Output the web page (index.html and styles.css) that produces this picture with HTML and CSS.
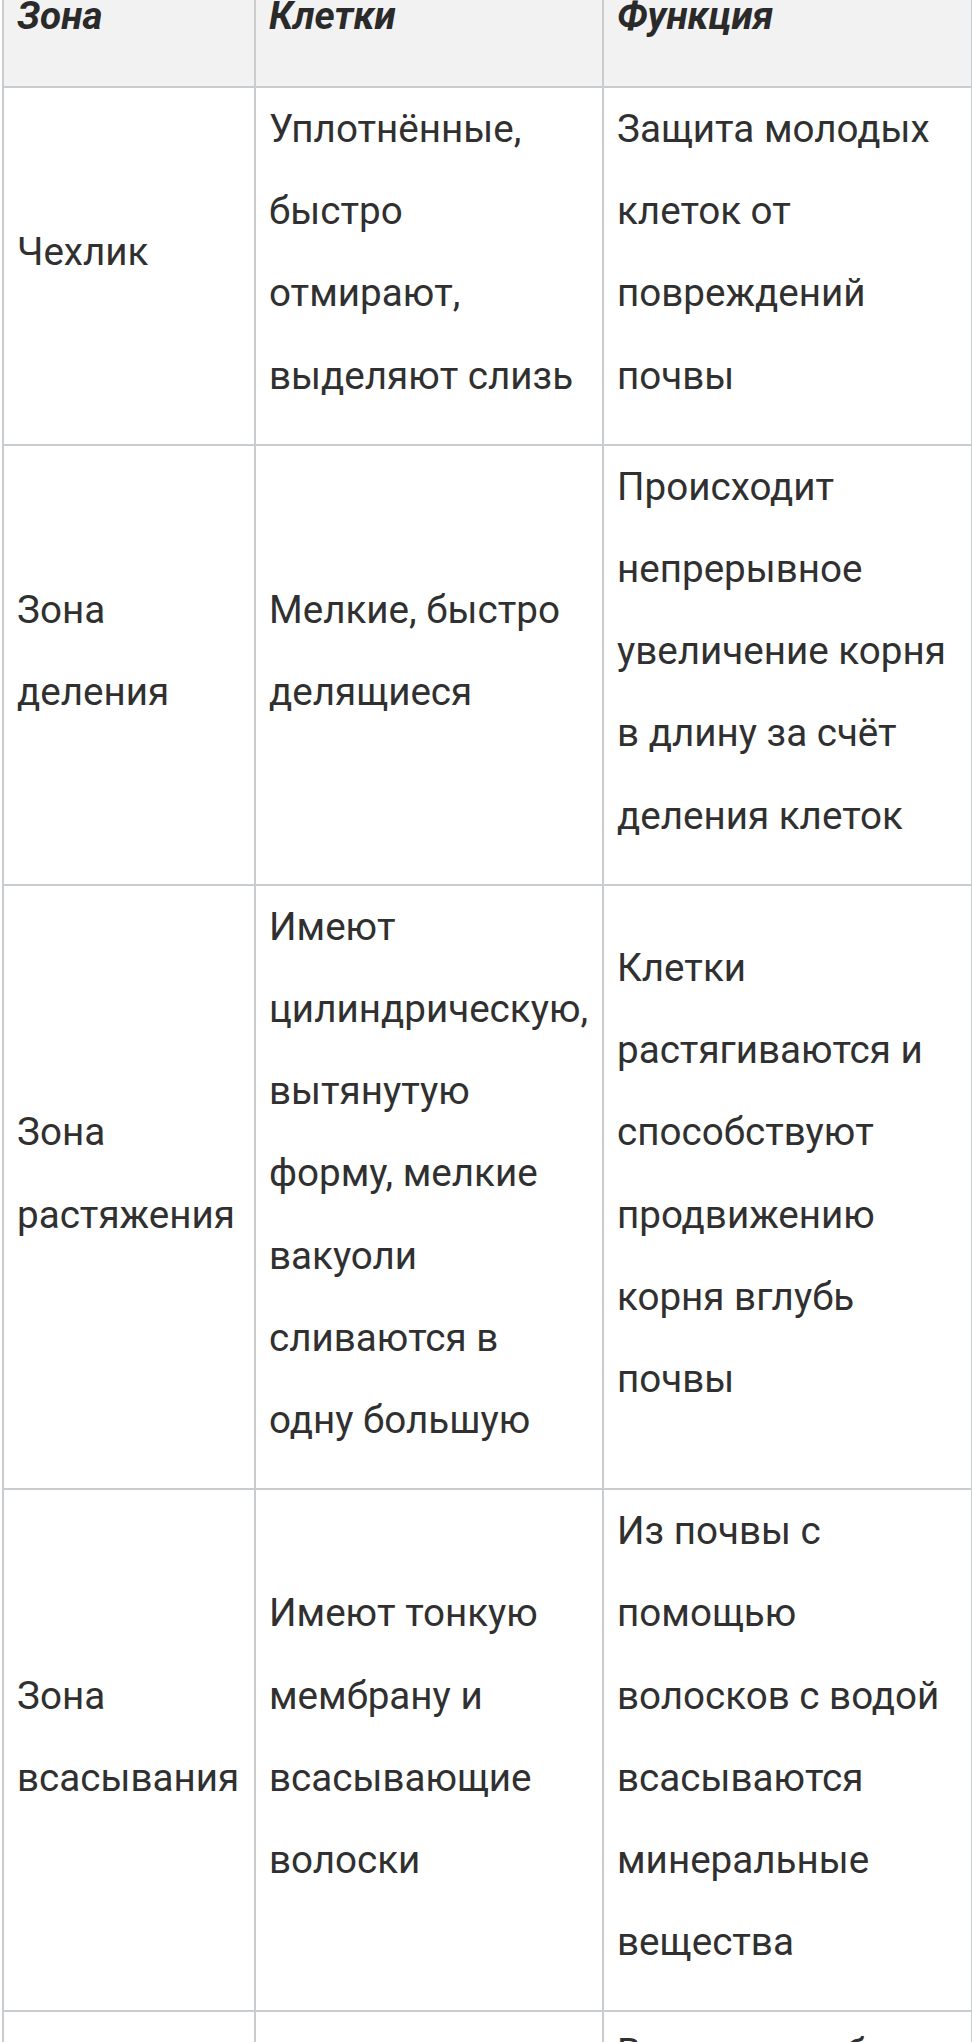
FILE: index.html
```html
<!DOCTYPE html>
<html lang="ru">
<head>
<meta charset="utf-8">
<title>Зоны корня</title>
<link rel="stylesheet" href="styles.css">
</head>
<body>
<table class="zones">
  <colgroup>
    <col class="c-zone">
    <col class="c-cells">
    <col class="c-func">
  </colgroup>
  <thead>
    <tr>
      <th>Зона</th>
      <th>Клетки</th>
      <th>Функция</th>
    </tr>
  </thead>
  <tbody>
    <tr>
      <td>Чехлик</td>
      <td>Уплотнённые, быстро отмирают, выделяют слизь</td>
      <td>Защита молодых клеток от повреждений почвы</td>
    </tr>
    <tr>
      <td>Зона деления</td>
      <td>Мелкие, быстро делящиеся</td>
      <td>Происходит непрерывное увеличение корня в длину за счёт деления клеток</td>
    </tr>
    <tr>
      <td>Зона растяжения</td>
      <td>Имеют цилиндрическую, вытянутую форму, мелкие вакуоли сливаются в одну большую</td>
      <td>Клетки растягиваются и способствуют продвижению корня вглубь почвы</td>
    </tr>
    <tr>
      <td>Зона всасывания</td>
      <td>Имеют тонкую мембрану и всасывающие волоски</td>
      <td>Из почвы с помощью волосков с водой всасываются минеральные вещества</td>
    </tr>
    <tr>
      <td>Зона проведения</td>
      <td>Проводящая ткань</td>
      <td>Вверх по стеблю поднимаются вода и минеральные вещества</td>
    </tr>
  </tbody>
</table>
</body>
</html>
```
FILE: styles.css
```css
html, body {
  margin: 0;
  padding: 0;
  background: #ffffff;
}

body {
  font-family: Roboto, "Noto Sans", "Liberation Sans", sans-serif;
  color: #303030;
  overflow: hidden;
}

.zones {
  margin: -25px 0 0 2px;
  width: 969px;
  table-layout: fixed;
  border-collapse: collapse;
  font-size: 38.6px;
  line-height: 82.2px;
}

.c-zone { width: 252px; }
.c-cells { width: 348px; }
.c-func { width: 369px; }

.zones th,
.zones td {
  border: 2px solid #c9cdd0;
  padding: 0 12px 27px 13px;
  vertical-align: middle;
  text-align: left;
}

.zones th {
  background: #f2f2f2;
  font-weight: 700;
  font-style: italic;
  color: #2a2a2a;
  line-height: 78px;
  padding-bottom: 31px;
}

.zones td {
  font-weight: 400;
}
```
